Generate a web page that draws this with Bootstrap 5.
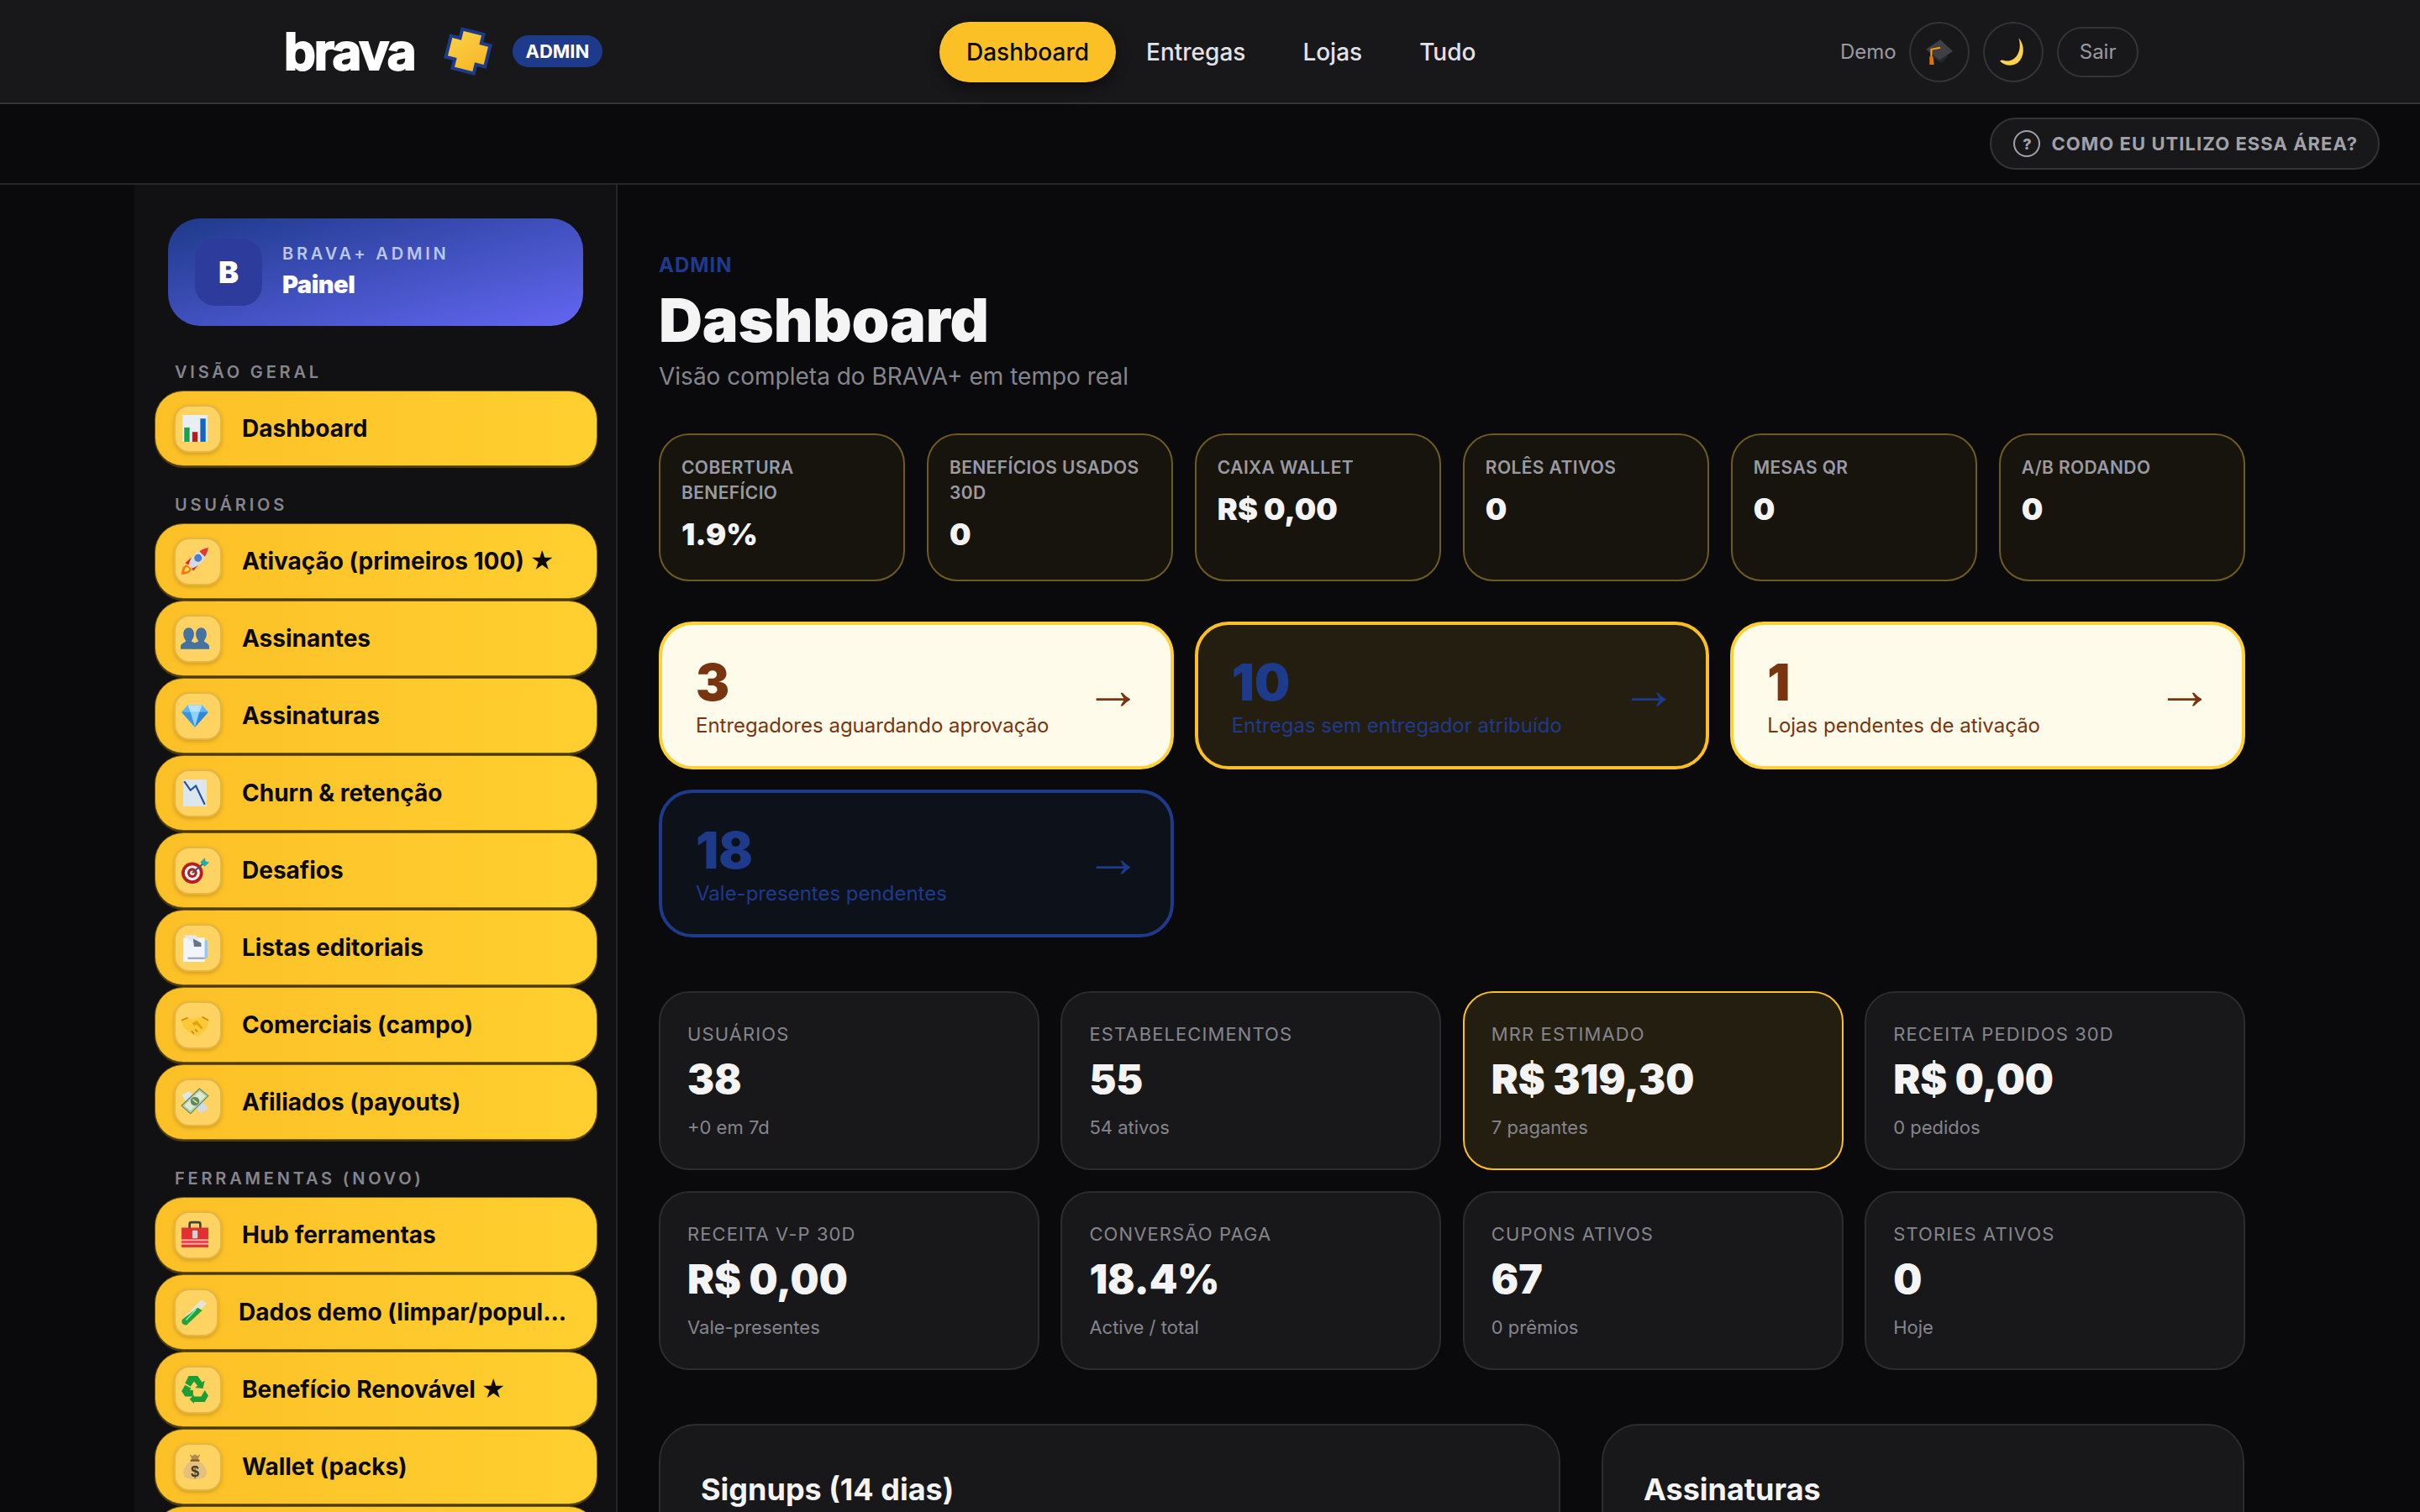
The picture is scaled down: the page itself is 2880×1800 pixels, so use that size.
<!doctype html>
<html lang="pt-BR">
<head>
<meta charset="utf-8">
<title>Dashboard</title>
<link href="https://cdn.jsdelivr.net/npm/bootstrap@5.3.0/dist/css/bootstrap.min.css" rel="stylesheet">
<style>
:root{--ink:#0a0a0c;--mute:#8c8c94;--line:#2b2b30;--y:#fbbf24;--navy:#1e3a8a}
html,body{height:100%}
body{background:#0a0a0d;color:#f4f4f5;font-family:Inter,"Liberation Sans",sans-serif;overflow:hidden}
.topbar{height:124px;background:#18181b;border-bottom:2px solid #333338;position:relative}
.logo-word{font-family:Inter,sans-serif;font-weight:700;font-size:60px;line-height:1;color:#fff;letter-spacing:-2px;-webkit-text-stroke:2px #fff;margin-left:338px;width:170px}
.plus-mark{width:60px;height:60px;margin-left:19px}
.admin-pill{background:var(--navy);color:#fff;font-weight:700;font-size:22px;line-height:38px;height:38px;padding:0 15.5px;border-radius:19px;margin-left:23px}
.center-nav{position:absolute;left:1118px;top:26px;gap:4px}
.center-nav a{display:block;height:72px;line-height:72px;padding:0 32px;border-radius:36px;font-size:28px;font-weight:500;color:#e2e2e8;text-decoration:none}
.center-nav a.on{background:#fcc027;color:#0a0a0c;box-shadow:0 6px 16px rgba(0,0,0,.45)}
.right-tools{position:absolute;left:2190px;top:26px;height:71px;gap:16px}
.right-tools .who{font-size:24px;color:#9a9aa2;margin-right:-1px}
.round-btn{width:72px;height:72px;border:2px solid #333338;border-radius:50%;display:flex;align-items:center;justify-content:center}
.round-btn svg{width:34px;height:34px}
.sair{height:60px;line-height:56px;padding:0 25px;border:2px solid #333338;border-radius:30px;font-size:24px;color:#9a9aa2}
.subbar{height:96px;border-bottom:2px solid #26262a;background:#0a0a0d;padding-right:48px}
.help-pill{height:62px;padding:0 24px 0 26px;border:2px solid #333338;border-radius:31px;background:#18181b;color:#a1a1aa;font-weight:700;font-size:22px;letter-spacing:1.05px;gap:13px}
.help-ico{width:32px;height:32px;border:2px solid #a1a1aa;border-radius:50%;display:flex;align-items:center;justify-content:center;font-size:18px;font-weight:800;letter-spacing:0}
.shell{height:calc(100vh - 220px);overflow:hidden}
.side{width:575px;margin-left:160px;flex:none;background:#111114;border-right:2px solid #26262a;padding:40px 22px 0 24px;overflow:hidden;height:100%}
.brand-box{margin:0 17px 0 16px;height:128px;border-radius:38px;background:linear-gradient(to bottom right,#1e3a8a,#6366f1);padding:24px 32px;gap:24px}
.brand-b{width:80px;height:80px;border-radius:24px;background:#2d3c9c;display:flex;align-items:center;justify-content:center;font-size:36px;font-weight:900;color:#fff}
.brand-k{font-size:20px;font-weight:600;letter-spacing:3.8px;color:#bcc6f0;line-height:26px;margin-top:-2px}
.brand-t{font-size:29px;font-weight:900;color:#fff;line-height:36px;letter-spacing:-.5px;margin-top:6px}
.sec-label{font-size:20px;font-weight:600;letter-spacing:3.8px;color:#85858d;line-height:24px;padding-left:24px;margin:0 0 10px}
.sec-gap{margin-top:34px}
.sec-gap2{margin-top:34px}
.first-label{margin-top:43px}
.nav-row{height:90px;border-radius:34px;background:linear-gradient(90deg,#fcc027,#ffcf2f);border:1px solid #7a5f18;margin-bottom:2px;padding:0 34px 0 22px;gap:24px;color:#0a0a0a;font-size:28px;font-weight:700;white-space:nowrap;box-shadow:0 2px 0 #4a3a10}
.nav-row .lbl{min-width:0}
.ni{flex:none;width:57px;height:57px;border-radius:18px;background:#ffd361;border:2px solid rgba(180,125,20,.35);box-shadow:0 2px 4px rgba(120,80,0,.3);display:flex;align-items:center;justify-content:center}
.ni svg{width:34px;height:34px;margin-left:-8px}
.ni-tight{width:53px}
.mainpane{flex:1;min-width:0;padding:0 0 0 49px;overflow:hidden}
.inner{width:1888px}
.eyebrow{font-size:24px;font-weight:700;color:var(--navy);line-height:30px;margin-top:81px;letter-spacing:1px}
.ptitle{font-size:72px;font-weight:900;color:#f4f4f5;line-height:84px;letter-spacing:-.2px;margin:8px 0 0}
.psub{font-size:28px;color:#85858d;line-height:36px;margin:7px 0 0}
.grid6{display:grid;grid-template-columns:repeat(6,1fr);gap:25.6px;margin-top:50px}
.tile{height:176px;background:#17140e;border:2px solid #6f5a20;border-radius:36px;padding:24px 25px}
.tile .tl{font-size:21px;font-weight:600;color:#9a9aa2;line-height:30px;letter-spacing:.4px}
.tile .tv{font-size:36px;font-weight:900;color:#f4f4f5;line-height:48px;margin-top:10px}
.grid3{display:grid;grid-template-columns:repeat(3,1fr);gap:24px 25px;margin-top:48px}
.alertx{height:176px;border-radius:40px;border:4px solid var(--y);padding:0 40px;justify-content:space-between}
.a-light{background:#fffbeb;border-color:#fdd033;color:#78350f}
.a-dark{background:#241e10;border-color:#fbbf24;color:var(--navy)}
.a-navy{background:#0d111a;border-color:var(--navy);color:var(--navy)}
.a-num{font-size:60px;font-weight:900;line-height:60px;margin-top:6px}
.a-txt{font-size:24px;line-height:34px;margin-top:5px}
.a-arrow{font-family:"Liberation Sans",sans-serif;font-size:68px;line-height:1;margin-top:-16px;margin-right:-6px}
.grid4{display:grid;grid-template-columns:repeat(4,1fr);gap:25px 25.6px;margin-top:64px}
.statc{height:213px;background:#18181b;border:2px solid #2b2b30;border-radius:36px;padding:34px 32px}
.statc.hot{background:#241e10;border-color:#fbbf24}
.statc .sl{font-size:22px;color:#85858d;line-height:30px;letter-spacing:1.1px}
.statc .sv{font-size:48px;font-weight:900;color:#f4f4f5;line-height:58px;margin-top:10px}
.statc .ss{font-size:22px;color:#85858d;line-height:30px;margin-top:13px}
.lower{display:grid;grid-template-columns:1073px 765px;gap:49px;margin-top:64px}
.panel{height:300px;background:#18181b;border:2px solid #2b2b30;border-radius:44px;padding:54px 48px}
.panel h3{font-size:36px;font-weight:700;color:#f4f4f5;line-height:44px;margin:0}
</style>
</head>
<body>
<svg width="0" height="0" class="position-absolute">
<defs>
<symbol id="i-chart" viewBox="0 0 32 32"><rect x="2" y="1" width="28" height="30" fill="#e8eef3"/><rect x="4" y="15" width="6" height="16" fill="#16a34a"/><rect x="13" y="20" width="6" height="11" fill="#b91c1c"/><rect x="22" y="5" width="6" height="26" fill="#1565c0"/></symbol>
<symbol id="i-rocket" viewBox="0 0 32 32"><path d="M1 31c0-6 2-10 6-11l5 5c-1 4-5 6-11 6z" fill="#f97316"/><path d="M4 28c0-3 1-5 3-6l3 3c-1 2-3 3-6 3z" fill="#fde047"/><path d="M5 18l7-6-1 9z" fill="#dc2626"/><path d="M14 27l6-7-9 1z" fill="#dc2626"/><path d="M9 20C11 11 19 3 31 1c-1 12-9 20-18 23z" fill="#d5dbe3"/><path d="M31 1c-4 .6-7 2-10 4l6 6c2-3 3.500-6 4-10z" fill="#e23a2e"/><circle cx="19.500" cy="12.500" r="3.600" fill="#3b82f6" stroke="#64748b" stroke-width="1.200"/></symbol>
<symbol id="i-people" viewBox="0 0 32 32"><g fill="#46729f"><path d="M0 28v-3c0-3 4-4 6-6-2-3-3-5-3-8 0-4 2.500-7 6-7s6 3 6 7c0 3-1 5-3 8 1 1 3 1.500 4 2.500V28z"/><path d="M14 28v-6c1-1 5-2 6-3-2-3-3-5-3-8 0-4 2.500-7 6-7s6 3 6 7c0 3-1 5-3 8 2 2 6 3 6 6v3z"/></g></symbol>
<symbol id="i-gem" viewBox="0 0 32 32"><path d="M8 4h16l7 8-15 17L1 12z" fill="#60b5f5"/><path d="M8 4h16l-3 8H11z" fill="#b5e2ff"/><path d="M11 12h10l-5 17z" fill="#8fd0ff"/><path d="M1 12h10l5 17z" fill="#3b95e0"/><path d="M21 12h10L16 29z" fill="#2f85d6"/></symbol>
<symbol id="i-down" viewBox="0 0 32 32"><rect x="3" y="1" width="26" height="30" fill="#dce6ef"/><path d="M4 3l7 10 6-5 10 21" fill="none" stroke="#1e4fa8" stroke-width="2"/></symbol>
<symbol id="i-dart" viewBox="0 0 32 32"><circle cx="13" cy="19" r="12" fill="#b91c1c"/><circle cx="13" cy="19" r="8.500" fill="#f5f5f5"/><circle cx="13" cy="19" r="5.500" fill="#b91c1c"/><circle cx="13" cy="19" r="2.500" fill="#f5f5f5"/><path d="M13 19L27 7" stroke="#475569" stroke-width="2"/><path d="M22 7l5-5 1 4 4 1-5 5z" fill="#22a7b5"/></symbol>
<symbol id="i-doc" viewBox="0 0 32 32"><rect x="3" y="5" width="24" height="27" fill="#f1f5f9"/><path d="M27 8h3v20h-3z" fill="#93c5fd"/><path d="M3 2h14l6 9H14z" fill="#e5e7eb"/><path d="M14 6l9 5v4h-8z" fill="#64748b"/><path d="M8 28h19" stroke="#94a3b8" stroke-width="2"/></symbol>
<symbol id="i-hands" viewBox="0 0 32 32"><path d="M0 10l8-2 7 2 3-2 7-1 7 4-3 9-9 9-5-1-5-4-7-5z" fill="#fcc93a"/><path d="M13 14l5-3 7 8-2 2-5-5-3 1z" fill="#e6a20e"/><path d="M8 8l-7 3M24 7l7 4M12 23l3 3M16 21l3 3" stroke="#c98a08" stroke-width="1.500" fill="none"/></symbol>
<symbol id="i-money" viewBox="0 0 32 32"><path d="M1 8l9-4 7 8-9 6z" fill="#dfe5ec"/><path d="M31 24l-9 4-7-8 9-6z" fill="#d3dae3"/><path d="M1 20L21 1l10 8-20 20z" fill="#b4ceaa" stroke="#64855c"/><path d="M4 20L21 4l7 5.500-17 16z" fill="#dcebd4"/><circle cx="16" cy="15" r="5" fill="#65895b"/><path d="M13.500 13l5 4" stroke="#e4f0dd" stroke-width="1.300"/></symbol>
<symbol id="i-tool" viewBox="0 0 32 32"><path d="M10 9V4a2 2 0 012-2h8a2 2 0 012 2v5" fill="none" stroke="#3f3f46" stroke-width="2.500"/><rect x="1" y="8" width="30" height="22" fill="#e0302f"/><rect x="1" y="21" width="30" height="2" fill="#fca5a5"/><rect x="1" y="25" width="30" height="2" fill="#fca5a5"/><rect x="13" y="11" width="6" height="9" rx="1" fill="#d1d5db"/></symbol>
<symbol id="i-tube" viewBox="0 0 32 32"><path d="M25 2l6 4L9 30c-3 2-8-2-5-6z" fill="#dfe8ef" opacity=".8"/><path d="M21 11l5 3L9 30c-3 2-8-2-5-6z" fill="#22a33a"/><path d="M8 25L19 13" stroke="#86efac" stroke-width="1.500"/></symbol>
<symbol id="i-recycle" viewBox="0 0 32 32"><g fill="#1c9c34"><path d="M9 1h10l5 7 3-2-2 9-9-1 3-2-4-5-4 6-6-4z"/><path d="M1 18l4-7 7 4-2 2 4 0v7H5z"/><path d="M15 24h8l4-7 4 6-4 7H15v2l-5-5 5-5z"/></g></symbol>
<symbol id="i-bag" viewBox="0 0 32 32"><path d="M10 2l3 2 3-2 3 2 3-2-3 7h-6z" fill="#b58a4d"/><rect x="11" y="8" width="10" height="2.500" fill="#7c5a2a"/><path d="M11 10h10c6 4 8 9 8 13 0 5-4 7-13 7S3 28 3 23c0-4 2-9 8-13z" fill="#e3c07e"/><text x="16" y="27" text-anchor="middle" font-family="Liberation Sans,sans-serif" font-size="17" font-weight="700" fill="#4b3a1d">$</text></symbol>
<symbol id="i-cap" viewBox="0 0 32 32"><path d="M9 16v7l9 5 7-6v-7z" fill="#27272a"/><path d="M1 13L17 2l14 13-15 10z" fill="#3f3f46"/><path d="M17 11L7 13v15" fill="none" stroke="#f59e0b" stroke-width="2"/><path d="M5 21h4l1 9H5z" fill="#d97706"/></symbol>
<symbol id="i-moon" viewBox="0 0 32 32"><path d="M22 0c7 8 7 21-1 28-6 4-14 4-20-2 1-1 2-1 3-1 5 2 12 1 16-5 4-6 4-13 2-20z" fill="#fcd34d"/></symbol>
</defs>
</svg>

<header class="topbar d-flex align-items-center">
  <div class="logo-word">brava</div>
  <svg class="plus-mark" viewBox="0 0 60 60"><defs><linearGradient id="pg" x1="0" y1="0" x2="1" y2="1"><stop offset="0" stop-color="#fcd34d"/><stop offset="1" stop-color="#f5b41e"/></linearGradient></defs><g transform="rotate(14 30 30)"><path d="M17 6h26v11h11v26H43v11H17V43H6V17h11z" fill="url(#pg)" stroke="#1e3a8a" stroke-width="4"/></g></svg>
  <span class="admin-pill">ADMIN</span>
  <nav class="center-nav d-flex">
    <a class="on" href="#">Dashboard</a><a href="#">Entregas</a><a href="#">Lojas</a><a href="#">Tudo</a>
  </nav>
  <div class="right-tools d-flex align-items-center">
    <span class="who">Demo</span>
    <span class="round-btn"><svg><use href="#i-cap"/></svg></span>
    <span class="round-btn"><svg><use href="#i-moon"/></svg></span>
    <span class="sair">Sair</span>
  </div>
</header>
<div class="subbar d-flex align-items-center justify-content-end">
  <div class="help-pill d-flex align-items-center"><span class="help-ico">?</span>COMO EU UTILIZO ESSA ÁREA?</div>
</div>

<div class="shell d-flex">
  <aside class="side">
    <div class="brand-box d-flex align-items-center">
      <div class="brand-b">B</div>
      <div><div class="brand-k">BRAVA+ ADMIN</div><div class="brand-t">Painel</div></div>
    </div>
    <div class="sec-label first-label">VISÃO GERAL</div>
    <div class="nav-row d-flex align-items-center"><span class="ni"><svg><use href="#i-chart"/></svg></span><span class="lbl">Dashboard</span></div>
    <div class="sec-label sec-gap">USUÁRIOS</div>
    <div class="nav-row d-flex align-items-center"><span class="ni"><svg><use href="#i-rocket"/></svg></span><span class="lbl">Ativação (primeiros 100) ★</span></div>
    <div class="nav-row d-flex align-items-center"><span class="ni"><svg><use href="#i-people"/></svg></span><span class="lbl">Assinantes</span></div>
    <div class="nav-row d-flex align-items-center"><span class="ni"><svg><use href="#i-gem"/></svg></span><span class="lbl">Assinaturas</span></div>
    <div class="nav-row d-flex align-items-center"><span class="ni"><svg><use href="#i-down"/></svg></span><span class="lbl">Churn &amp; retenção</span></div>
    <div class="nav-row d-flex align-items-center"><span class="ni"><svg><use href="#i-dart"/></svg></span><span class="lbl">Desafios</span></div>
    <div class="nav-row d-flex align-items-center"><span class="ni"><svg><use href="#i-doc"/></svg></span><span class="lbl">Listas editoriais</span></div>
    <div class="nav-row d-flex align-items-center"><span class="ni"><svg><use href="#i-hands"/></svg></span><span class="lbl">Comerciais (campo)</span></div>
    <div class="nav-row d-flex align-items-center"><span class="ni"><svg><use href="#i-money"/></svg></span><span class="lbl">Afiliados (payouts)</span></div>
    <div class="sec-label sec-gap2">FERRAMENTAS (NOVO)</div>
    <div class="nav-row d-flex align-items-center"><span class="ni"><svg><use href="#i-tool"/></svg></span><span class="lbl">Hub ferramentas</span></div>
    <div class="nav-row d-flex align-items-center"><span class="ni ni-tight"><svg><use href="#i-tube"/></svg></span><span class="lbl">Dados demo (limpar/popul...</span></div>
    <div class="nav-row d-flex align-items-center"><span class="ni"><svg><use href="#i-recycle"/></svg></span><span class="lbl">Benefício Renovável ★</span></div>
    <div class="nav-row d-flex align-items-center"><span class="ni"><svg><use href="#i-bag"/></svg></span><span class="lbl">Wallet (packs)</span></div>
    <div class="nav-row d-flex align-items-center"></div>
  </aside>
  <main class="mainpane">
    <div class="inner">
      <div class="eyebrow">ADMIN</div>
      <h1 class="ptitle">Dashboard</h1>
      <p class="psub">Visão completa do BRAVA+ em tempo real</p>
      <div class="grid6">
        <div class="tile"><div class="tl">COBERTURA BENEFÍCIO</div><div class="tv">1.9%</div></div>
        <div class="tile"><div class="tl">BENEFÍCIOS USADOS 30D</div><div class="tv">0</div></div>
        <div class="tile"><div class="tl">CAIXA WALLET</div><div class="tv">R$ 0,00</div></div>
        <div class="tile"><div class="tl">ROLÊS ATIVOS</div><div class="tv">0</div></div>
        <div class="tile"><div class="tl">MESAS QR</div><div class="tv">0</div></div>
        <div class="tile"><div class="tl">A/B RODANDO</div><div class="tv">0</div></div>
      </div>
      <div class="grid3">
        <div class="alertx a-light d-flex align-items-center"><div><div class="a-num">3</div><div class="a-txt">Entregadores aguardando aprovação</div></div><span class="a-arrow">→</span></div>
        <div class="alertx a-dark d-flex align-items-center"><div><div class="a-num">10</div><div class="a-txt">Entregas sem entregador atribuído</div></div><span class="a-arrow">→</span></div>
        <div class="alertx a-light d-flex align-items-center"><div><div class="a-num">1</div><div class="a-txt">Lojas pendentes de ativação</div></div><span class="a-arrow">→</span></div>
        <div class="alertx a-navy d-flex align-items-center"><div><div class="a-num">18</div><div class="a-txt">Vale-presentes pendentes</div></div><span class="a-arrow">→</span></div>
      </div>
      <div class="grid4">
        <div class="statc"><div class="sl">USUÁRIOS</div><div class="sv">38</div><div class="ss">+0 em 7d</div></div>
        <div class="statc"><div class="sl">ESTABELECIMENTOS</div><div class="sv">55</div><div class="ss">54 ativos</div></div>
        <div class="statc hot"><div class="sl">MRR ESTIMADO</div><div class="sv">R$ 319,30</div><div class="ss">7 pagantes</div></div>
        <div class="statc"><div class="sl">RECEITA PEDIDOS 30D</div><div class="sv">R$ 0,00</div><div class="ss">0 pedidos</div></div>
        <div class="statc"><div class="sl">RECEITA V-P 30D</div><div class="sv">R$ 0,00</div><div class="ss">Vale-presentes</div></div>
        <div class="statc"><div class="sl">CONVERSÃO PAGA</div><div class="sv">18.4%</div><div class="ss">Active / total</div></div>
        <div class="statc"><div class="sl">CUPONS ATIVOS</div><div class="sv">67</div><div class="ss">0 prêmios</div></div>
        <div class="statc"><div class="sl">STORIES ATIVOS</div><div class="sv">0</div><div class="ss">Hoje</div></div>
      </div>
      <div class="lower">
        <div class="panel"><h3>Signups (14 dias)</h3></div>
        <div class="panel"><h3>Assinaturas</h3></div>
      </div>
    </div>
  </main>
</div>
<script src="https://cdn.jsdelivr.net/npm/bootstrap@5.3.0/dist/js/bootstrap.bundle.min.js"></script>
</body>
</html>
